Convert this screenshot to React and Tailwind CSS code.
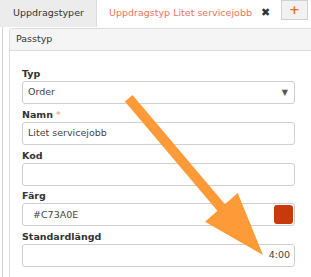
const Field = ({ label, required, children, first }) => (
  <div className={first ? '' : 'mt-[3.75px]'}>
    <div className="h-[14px] leading-[14px] font-bold text-[#333]">
      {label}
      {required && <span className="font-normal text-[#e0a060]"> *</span>}
    </div>
    {children}
  </div>
);

const inputCls =
  'h-[23px] w-full border border-[#cfcfcf] rounded-[3px] bg-white flex items-center text-[#444]';

export default function App() {
  return (
    <div
      className="relative w-[311px] h-[277px] overflow-hidden bg-white text-[9.5px]"
      style={{ fontFamily: '"DejaVu Sans", Verdana, sans-serif' }}
    >
      <div className="flex h-[27px]">
        <div className="w-[97px] bg-[#ececec] border-r border-[#dcdcdc] flex items-center pl-[13px] text-[#333]">
          Uppdragstyper
        </div>
        <div className="w-[182px] bg-white flex items-center pl-[12px] text-[#f0735c]">
          <span>Uppdragstyp Litet servicejobb</span>
          <span className="ml-[9px] text-[#333] font-bold text-[11px]">✖</span>
        </div>
        <div className="ml-[2px] w-[27px] h-[20px] border border-[#d0d0d0] bg-[#f2f2f2] flex items-center justify-center text-[#f26b2a] font-bold text-[13px]">
          +
        </div>
      </div>

      <div className="ml-[2px] border-l border-[#d4d4d4] h-[250px] pt-px pl-[6px]">
        <div className="w-[320px] border border-[#dcdcdc] rounded-tl-[3px]">
          <div className="h-[22px] bg-[#f5f5f5] border-b border-[#dcdcdc] flex items-center pl-[6px] text-[#333] rounded-tl-[3px]">
            Passtyp
          </div>
          <div className="pt-[16px] pl-[12px] w-[285px] pb-4">
            <Field label="Typ" first>
              <div className={`${inputCls} justify-between pl-[5px] pr-[6px]`}>
                <span>Order</span>
                <span className="text-[#555] text-[8px]">▼</span>
              </div>
            </Field>
            <Field label="Namn" required>
              <div className={`${inputCls} pl-[5px]`}>Litet servicejobb</div>
            </Field>
            <Field label="Kod">
              <div className={inputCls}></div>
            </Field>
            <Field label="Färg">
              <div className={`${inputCls} justify-between pl-[10px] pr-px`}>
                <span>#C73A0E</span>
                <span className="w-[19px] h-[19px] rounded-[3px] bg-[#c83a0e]"></span>
              </div>
            </Field>
            <Field label="Standardlängd">
              <div className={`${inputCls} justify-end pr-[4px]`}>4:00</div>
            </Field>
          </div>
        </div>
      </div>

      <svg className="absolute left-0 top-0" width="311" height="277" viewBox="0 0 311 277">
        <line x1="128.7" y1="98.3" x2="222" y2="208.5" stroke="#fe9a37" strokeWidth="10" />
        <polygon points="205,221.7 237.7,193 263,255" fill="#fe9a37" />
      </svg>
    </div>
  );
}
